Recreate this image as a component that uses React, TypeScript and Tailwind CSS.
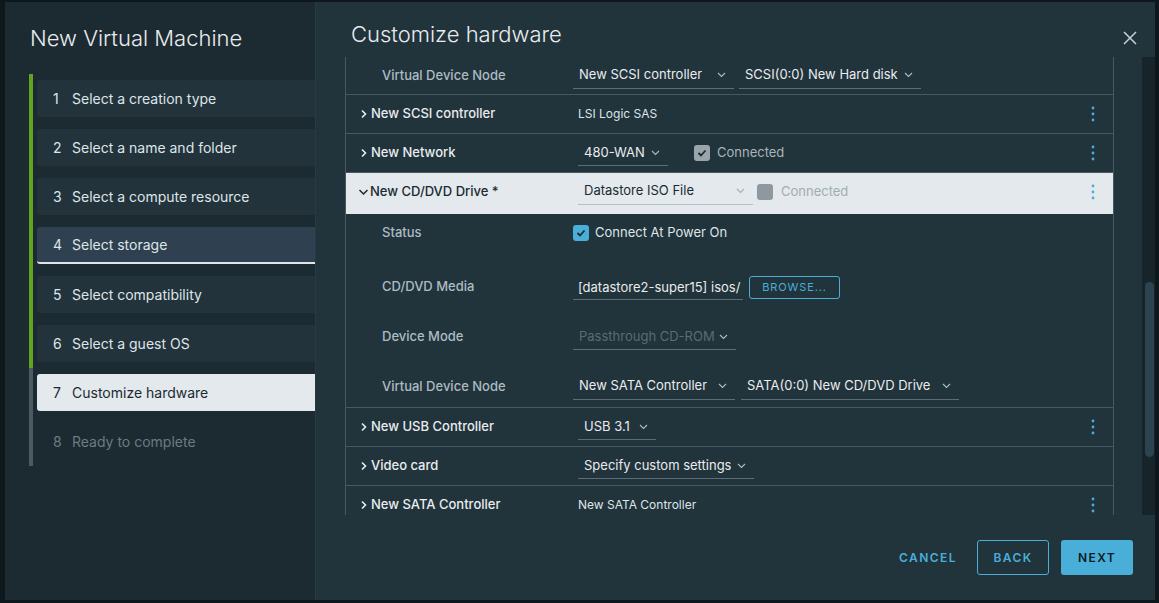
import React from 'react';

const steps = [
  { n: 1, label: 'Select a creation type', state: 'done' },
  { n: 2, label: 'Select a name and folder', state: 'done' },
  { n: 3, label: 'Select a compute resource', state: 'done' },
  { n: 4, label: 'Select storage', state: 'hover' },
  { n: 5, label: 'Select compatibility', state: 'done' },
  { n: 6, label: 'Select a guest OS', state: 'done' },
  { n: 7, label: 'Customize hardware', state: 'active' },
  { n: 8, label: 'Ready to complete', state: 'todo' },
];

function ChevronRight() {
  return (
    <svg width="8" height="10" viewBox="0 0 8 10" className="shrink-0">
      <path d="M2 1.5l3.5 3.5L2 8.5" fill="none" stroke="#e9ecef" strokeWidth="1.6" />
    </svg>
  );
}

function ChevronDown({ color = '#1b2a32' }: { color?: string }) {
  return (
    <svg width="11" height="8" viewBox="0 0 11 8" className="shrink-0">
      <path d="M1.5 2l4 4 4-4" fill="none" stroke={color} strokeWidth="1.5" />
    </svg>
  );
}

function Caret({ color = '#adbbc4' }: { color?: string }) {
  return (
    <svg width="9" height="6" viewBox="0 0 9 6" className="shrink-0">
      <path d="M1 1l3.5 3.5L8 1" fill="none" stroke={color} strokeWidth="1.1" />
    </svg>
  );
}

function Kebab() {
  return (
    <svg width="4" height="16" viewBox="0 0 4 16" className="shrink-0">
      <circle cx="2" cy="2" r="1.4" fill="#49afd9" />
      <circle cx="2" cy="8" r="1.4" fill="#49afd9" />
      <circle cx="2" cy="14" r="1.4" fill="#49afd9" />
    </svg>
  );
}

function Check({ bg, mark, checked = true }: { bg: string; mark: string; checked?: boolean }) {
  return (
    <span className={`flex h-[16px] w-[16px] shrink-0 items-center justify-center rounded-[3px] ${bg}`}>
      {checked && (
        <svg width="10" height="8" viewBox="0 0 10 8">
          <path d="M1.5 4l2.5 2.5L8.5 1.5" fill="none" stroke={mark} strokeWidth="1.8" />
        </svg>
      )}
    </span>
  );
}

function Select({ text, width, dark, disabled }: { text: string; width: string; dark?: boolean; disabled?: boolean }) {
  const textColor = dark ? 'text-[#1b2a32]' : disabled ? 'text-[#5b6b73]' : 'text-[#e9ecef]';
  return (
    <div className={`flex h-[26px] shrink-0 items-center justify-between border-b pl-[6px] pr-[8px] ${width} ${dark ? 'border-[#b6c0c6]' : 'border-[#5e6d75]'}`}>
      <span className={`truncate text-[13px] ${textColor}`}>{text}</span>
      <Caret color={dark ? '#a4b0b7' : '#adbbc4'} />
    </div>
  );
}

function DeviceRow({ label, children, kebab = true }: { label: string; children?: React.ReactNode; kebab?: boolean }) {
  return (
    <div className="flex h-[39px] shrink-0 items-center border-b border-[#485861]">
      <div className="flex w-[232px] items-center gap-[3px] pl-[14px]">
        <ChevronRight />
        <span className="text-[13px] font-medium text-[#e9ecef]">{label}</span>
      </div>
      <div className="flex flex-1 items-center gap-[6px]">{children}</div>
      {kebab && (
        <div className="pr-[18px]">
          <Kebab />
        </div>
      )}
    </div>
  );
}

function SubRow({ label, children, className }: { label: string; children: React.ReactNode; className: string }) {
  return (
    <div className={`flex shrink-0 items-center ${className}`}>
      <div className="w-[227px] pl-[36px] text-[13px] font-medium text-[#adbbc4]">{label}</div>
      <div className="flex flex-1 items-center gap-[6px]">{children}</div>
    </div>
  );
}

export default function App() {
  return (
    <div className="h-[603px] w-[1159px] overflow-hidden bg-[#0e171b] pb-[3px] pl-[5px] pr-[4px] pt-[2px] font-['Inter','Liberation_Sans',sans-serif]">
      <div className="flex h-full">
        {/* Wizard steps */}
        <div className="w-[311px] shrink-0 border-r border-[#2a3a42] bg-[#1c2a31] pt-[21px]">
          <h1 className="pl-[25px] text-[22px] font-light leading-[30px] text-[#e9ecef]">New Virtual Machine</h1>
          <div className="ml-[24px] mt-[21px]">
            {steps.map((s) => {
              const bar = s.n <= 6 ? 'border-[#62a420]' : 'border-[#4b5960]';
              let item = 'bg-[#22333b] text-[#dfe5e8]';
              if (s.state === 'hover') item = 'bg-[#2f4150] text-[#dfe5e8] border-b-2 border-[#dfe5e8]';
              if (s.state === 'active') item = 'bg-[#e3e9ec] text-[#1b2a32]';
              if (s.state === 'todo') item = 'text-[#6c7b82]';
              return (
                <div key={s.n} className={`border-l-4 py-[6px] pl-[4px] ${bar}`}>
                  <div className={`flex h-[37px] items-center rounded-l-[3px] pb-[1px] pl-[16px] text-[14px] ${item}`}>
                    <span className="w-[19px]">{s.n}</span>
                    <span>{s.label}</span>
                  </div>
                </div>
              );
            })}
          </div>
        </div>

        {/* Customize hardware */}
        <div className="flex flex-1 flex-col bg-[#21333b]">
          <div className="flex h-[55px] shrink-0 items-start justify-between pl-[35px] pr-[18px] pt-[17px]">
            <h2 className="text-[22px] font-light leading-[30px] text-[#e9ecef]">Customize hardware</h2>
            <svg width="14" height="14" viewBox="0 0 14 14" className="mt-[12px]">
              <path d="M1 1l12 12M13 1L1 13" stroke="#c9d2d7" strokeWidth="1.5" />
            </svg>
          </div>

          <div className="flex h-[458px] shrink-0 pl-[29px]">
            <div className="flex w-[769px] flex-col overflow-hidden border-x border-[#485861]">
              <div className="flex h-[38px] shrink-0 items-center border-b border-[#485861]">
                <div className="w-[227px] pl-[36px] text-[13px] font-medium text-[#adbbc4]">Virtual Device Node</div>
                <div className="flex items-center gap-[5px]">
                  <Select text="New SCSI controller" width="w-[161px]" />
                  <Select text="SCSI(0:0) New Hard disk" width="w-[182px]" />
                </div>
              </div>

              <DeviceRow label="New SCSI controller">
                <span className="text-[12px] text-[#dfe5e8]">LSI Logic SAS</span>
              </DeviceRow>

              <DeviceRow label="New Network">
                <Select text="480-WAN" width="w-[90px]" />
                <div className="ml-[20px] flex items-center gap-[7px]">
                  <Check bg="bg-[#9aa5ab]" mark="#1b2a32" />
                  <span className="text-[13px] text-[#a9b5bb]">Connected</span>
                </div>
              </DeviceRow>

              <div className="flex h-[41px] shrink-0 items-center bg-[#e3e9ec] pb-[4px]">
                <div className="flex w-[232px] items-center gap-[1px] pl-[12px]">
                  <ChevronDown />
                  <span className="text-[13px] font-medium text-[#1b2a32]">New CD/DVD Drive *</span>
                </div>
                <div className="flex flex-1 items-center gap-[4px]">
                  <Select text="Datastore ISO File" width="w-[175px]" dark />
                  <div className="flex items-center gap-[8px]">
                    <Check bg="bg-[#8e999f]" mark="#8e999f" checked={false} />
                    <span className="text-[13px] text-[#a2adb3]">Connected</span>
                  </div>
                </div>
                <div className="pr-[18px]">
                  <Kebab />
                </div>
              </div>

              <div className="flex shrink-0 flex-col border-b border-[#485861]">
                <SubRow label="Status" className="h-[38px]">
                  <div className="flex items-center gap-[6px]">
                    <Check bg="bg-[#49afd9]" mark="#1b2a32" />
                    <span className="text-[13px] text-[#dfe5e8]">Connect At Power On</span>
                  </div>
                </SubRow>
                <div className="h-[10px]" />
                <SubRow label="CD/DVD Media" className="h-[50px]">
                  <div className="h-[26px] w-[170px] shrink-0 overflow-hidden whitespace-nowrap border-b border-[#5e6d75] pl-[5px] pt-[4px] text-[13px] text-[#e9ecef]">
                    [datastore2-super15] isos/
                  </div>
                  <button className="flex h-[23px] w-[91px] shrink-0 items-center justify-center rounded-[3px] border border-[#49afd9] text-[11px] tracking-[0.08em] text-[#49afd9]">
                    BROWSE...
                  </button>
                </SubRow>
                <SubRow label="Device Mode" className="h-[50px]">
                  <Select text="Passthrough CD-ROM" width="w-[163px]" disabled />
                </SubRow>
                <SubRow label="Virtual Device Node" className="h-[45px] pt-[4px]">
                  <Select text="New SATA Controller" width="w-[162px]" />
                  <Select text="SATA(0:0) New CD/DVD Drive" width="w-[218px]" />
                </SubRow>
              </div>

              <DeviceRow label="New USB Controller">
                <Select text="USB 3.1" width="w-[78px]" />
              </DeviceRow>

              <DeviceRow label="Video card" kebab={false}>
                <Select text="Specify custom settings" width="w-[176px]" />
              </DeviceRow>

              <DeviceRow label="New SATA Controller">
                <span className="text-[12px] text-[#dfe5e8]">New SATA Controller</span>
              </DeviceRow>
            </div>

            <div className="ml-[28px] w-[13px] bg-[#17252b] pl-[3px] pr-[1px] pt-[225px]">
              <div className="h-[175px] rounded-full bg-[#2c4350]" />
            </div>
          </div>

          <div className="flex flex-1 items-start justify-end gap-[8px] pr-[22px] pt-[25px]">
            <button className="h-[35px] px-[12px] text-[12px] font-semibold tracking-[0.12em] text-[#49afd9]">CANCEL</button>
            <button className="h-[35px] w-[72px] rounded-[3px] border border-[#49afd9] text-[12px] font-semibold tracking-[0.12em] text-[#49afd9]">
              BACK
            </button>
            <button className="ml-[4px] h-[35px] w-[72px] rounded-[3px] bg-[#49afd9] text-[12px] font-semibold tracking-[0.12em] text-[#0e1b21]">
              NEXT
            </button>
          </div>
        </div>
      </div>
    </div>
  );
}
